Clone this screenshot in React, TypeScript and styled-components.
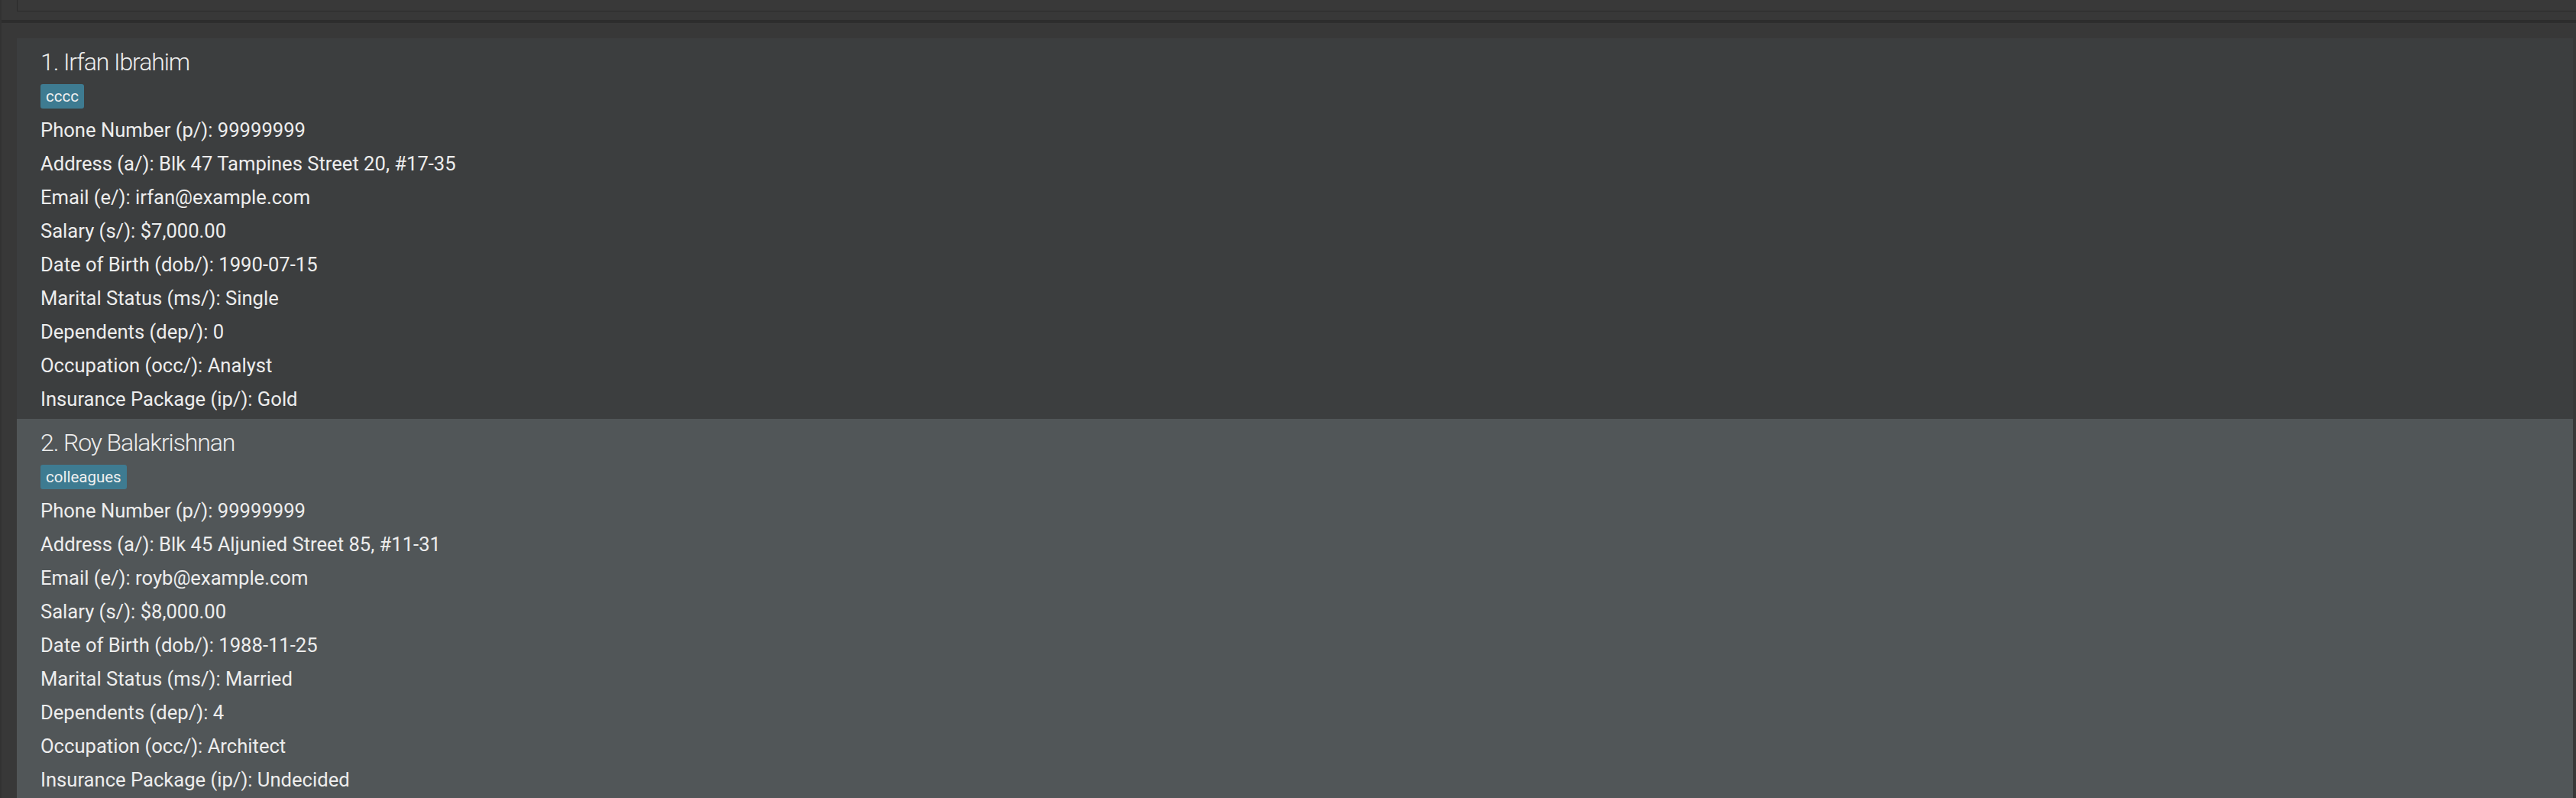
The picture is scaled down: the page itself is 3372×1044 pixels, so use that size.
import React from 'react';
import styled, { createGlobalStyle } from 'styled-components';

const GlobalStyle = createGlobalStyle`
  html, body {
    margin: 0;
    padding: 0;
    background: #383838;
  }
  body {
    width: 3372px;
    height: 1044px;
    overflow: hidden;
    font-family: Roboto, "Liberation Sans", sans-serif;
  }
`;

const Window = styled.div`
  width: 3372px;
  height: 1044px;
  box-sizing: border-box;
  display: flex;
  flex-direction: column;
  background: #383838;
  border-left: 2px solid #323232;
  overflow: hidden;
`;

const ResultPane = styled.div`
  flex: none;
  height: 26px;
  padding-left: 20px;
  box-sizing: border-box;
  background: #383838;
`;

const ResultBox = styled.div`
  height: 15px;
  box-sizing: border-box;
  background: #393939;
  border-left: 1px solid #2b2b2b;
  border-bottom: 1px solid #2b2b2b;
`;

const PaneDivider = styled.div`
  flex: none;
  height: 4px;
  margin-left: -2px;
  background: #2d2d2d;
`;

const ListPane = styled.div`
  flex: 1;
  min-height: 0;
  display: flex;
  flex-direction: column;
  padding: 20px 4px 0 20px;
  background: #383838;
`;

const Card = styled.div<{ $odd: boolean }>`
  flex: none;
  display: flex;
  flex-direction: column;
  align-items: flex-start;
  padding: 11px 0 4px 31px;
  background: ${(p) => (p.$odd ? '#515658' : '#3c3e3f')};
  color: #ededed;
`;

const Name = styled.div`
  font-size: 32px;
  font-weight: 300;
  line-height: 40px;
  letter-spacing: -1.1px;
  margin-bottom: 9px;
  white-space: nowrap;
`;

const TagRow = styled.div`
  display: flex;
  gap: 8px;
  margin-bottom: 6px;
`;

const Tag = styled.span`
  display: inline-block;
  height: 32px;
  box-sizing: border-box;
  padding: 1px 7px 0;
  font-size: 20.5px;
  line-height: 31px;
  color: #f0f0f0;
  background: #3e7b91;
  border-radius: 3px;
`;

const Detail = styled.div`
  font-size: 25.6px;
  line-height: 44px;
  white-space: nowrap;
`;

type Person = {
  name: string;
  tags: string[];
  phone: string;
  address: string;
  email: string;
  salary: string;
  dob: string;
  marital: string;
  dependents: string;
  occupation: string;
  insurance: string;
};

const people: Person[] = [
  {
    name: 'Irfan Ibrahim',
    tags: ['cccc'],
    phone: '99999999',
    address: 'Blk 47 Tampines Street 20, #17-35',
    email: 'irfan@example.com',
    salary: '$7,000.00',
    dob: '1990-07-15',
    marital: 'Single',
    dependents: '0',
    occupation: 'Analyst',
    insurance: 'Gold',
  },
  {
    name: 'Roy Balakrishnan',
    tags: ['colleagues'],
    phone: '99999999',
    address: 'Blk 45 Aljunied Street 85, #11-31',
    email: 'royb@example.com',
    salary: '$8,000.00',
    dob: '1988-11-25',
    marital: 'Married',
    dependents: '4',
    occupation: 'Architect',
    insurance: 'Undecided',
  },
];

function PersonCard({ person, index }: { person: Person; index: number }) {
  const rows: [string, string][] = [
    ['Phone Number (p/)', person.phone],
    ['Address (a/)', person.address],
    ['Email (e/)', person.email],
    ['Salary (s/)', person.salary],
    ['Date of Birth (dob/)', person.dob],
    ['Marital Status (ms/)', person.marital],
    ['Dependents (dep/)', person.dependents],
    ['Occupation (occ/)', person.occupation],
    ['Insurance Package (ip/)', person.insurance],
  ];
  return (
    <Card $odd={index % 2 === 1}>
      <Name>
        {index + 1}. {person.name}
      </Name>
      <TagRow>
        {person.tags.map((t) => (
          <Tag key={t}>{t}</Tag>
        ))}
      </TagRow>
      {rows.map(([label, value]) => (
        <Detail key={label}>
          {label}: {value}
        </Detail>
      ))}
    </Card>
  );
}

export default function App() {
  return (
    <>
      <GlobalStyle />
      <Window>
        <ResultPane>
          <ResultBox />
        </ResultPane>
        <PaneDivider />
        <ListPane>
          {people.map((p, i) => (
            <PersonCard key={p.name} person={p} index={i} />
          ))}
        </ListPane>
      </Window>
    </>
  );
}
